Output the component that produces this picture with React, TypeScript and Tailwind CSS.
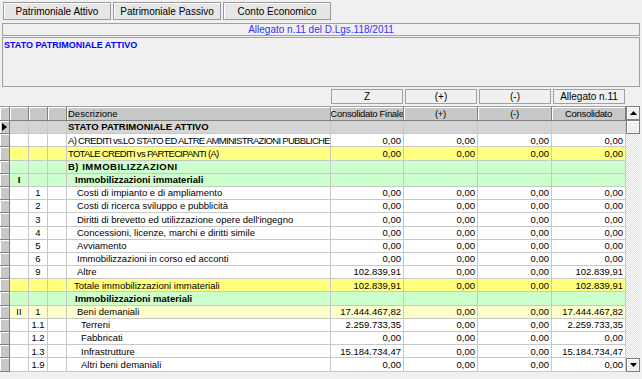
import React from 'react'

type Row = {
  c1?: string
  c2?: string
  desc: string
  pad: string
  bg: string
  bold?: boolean
  track?: string
  current?: boolean
  vals?: string[]
}

const Z = ['0,00', '0,00', '0,00', '0,00']

const rows: Row[] = [
  { desc: 'STATO PATRIMONIALE ATTIVO', pad: 'pl-[1px]', bg: 'bg-[#d4d4d4]', bold: true, current: true },
  { desc: 'A) CREDITI vs.LO STATO ED ALTRE AMMINISTRAZIONI PUBBLICHE PER LA PARTECIPAZIONE AL FONDO DI DOTAZIONE', pad: 'pl-[1px]', bg: 'bg-white', track: 'tracking-[-0.7px]', vals: Z },
  { desc: 'TOTALE CREDITI vs PARTECIPANTI (A)', pad: 'pl-[1px]', bg: 'bg-[#ffff80]', track: 'tracking-[-0.7px]', vals: Z },
  { desc: 'B) IMMOBILIZZAZIONI', pad: 'pl-[1px]', bg: 'bg-[#ccffcc]', bold: true, track: 'tracking-[0.5px]' },
  { c1: 'I', desc: 'Immobilizzazioni immateriali', pad: 'pl-[8px]', bg: 'bg-[#ccffcc]', bold: true },
  { c2: '1', desc: 'Costi di impianto e di ampliamento', pad: 'pl-[10px]', bg: 'bg-white', vals: Z },
  { c2: '2', desc: 'Costi di ricerca sviluppo e pubblicità', pad: 'pl-[10px]', bg: 'bg-white', vals: Z },
  { c2: '3', desc: "Diritti di brevetto ed utilizzazione opere dell'ingegno", pad: 'pl-[10px]', bg: 'bg-white', vals: Z },
  { c2: '4', desc: 'Concessioni, licenze, marchi e diritti simile', pad: 'pl-[10px]', bg: 'bg-white', vals: Z },
  { c2: '5', desc: 'Avviamento', pad: 'pl-[10px]', bg: 'bg-white', vals: Z },
  { c2: '6', desc: 'Immobilizzazioni in corso ed acconti', pad: 'pl-[10px]', bg: 'bg-white', vals: Z },
  { c2: '9', desc: 'Altre', pad: 'pl-[10px]', bg: 'bg-white', vals: ['102.839,91', '0,00', '0,00', '102.839,91'] },
  { desc: 'Totale immobilizzazioni immateriali', pad: 'pl-[7px]', bg: 'bg-[#ffff80]', vals: ['102.839,91', '0,00', '0,00', '102.839,91'] },
  { desc: 'Immobilizzazioni materiali', pad: 'pl-[8px]', bg: 'bg-[#ccffcc]', bold: true },
  { c1: 'II', c2: '1', desc: 'Beni demaniali', pad: 'pl-[10px]', bg: 'bg-[#ffffcc]', vals: ['17.444.467,82', '0,00', '0,00', '17.444.467,82'] },
  { c2: '1.1', desc: 'Terreni', pad: 'pl-[14px]', bg: 'bg-white', vals: ['2.259.733,35', '0,00', '0,00', '2.259.733,35'] },
  { c2: '1.2', desc: 'Fabbricati', pad: 'pl-[14px]', bg: 'bg-white', vals: Z },
  { c2: '1.3', desc: 'Infrastrutture', pad: 'pl-[14px]', bg: 'bg-white', vals: ['15.184.734,47', '0,00', '0,00', '15.184.734,47'] },
  { c2: '1.9', desc: 'Altri beni demaniali', pad: 'pl-[14px]', bg: 'bg-white', vals: Z },
]

const numW = ['w-[73px]', 'w-[74px]', 'w-[74px]', 'w-[74px]']

const cell = 'shrink-0 border-r border-b border-[#c8c8c8] flex items-center'
const head = 'shrink-0 bg-[#c8c8c8] border-r border-b border-[#808080] shadow-[inset_1px_1px_0_#ffffff] flex items-center'

function GridRow({ r }: { r: Row }) {
  return (
    <div className={`flex h-[13.2px] ${r.bg}`}>
      <div className={`${head} w-[10px] pl-[2px]`}>
        {r.current && (
          <svg width="5" height="8" viewBox="0 0 5 8">
            <path d="M0 0 L5 4 L0 8 Z" fill="#000" />
          </svg>
        )}
      </div>
      <div className={`${cell} w-[19px] justify-center ${r.bold ? 'font-bold' : ''}`}>{r.c1}</div>
      <div className={`${cell} w-[19px] justify-center`}>{r.c2}</div>
      <div className={`${cell} w-[19px]`} />
      <div className={`${cell} w-[264px] ${r.pad} overflow-hidden whitespace-nowrap ${r.bold ? 'font-bold' : ''} ${r.track ?? ''}`}>
        {r.desc}
      </div>
      {numW.map((w, i) => (
        <div key={i} className={`${cell} ${w} justify-end pr-[2px]`}>
          {r.vals ? r.vals[i] : ''}
        </div>
      ))}
    </div>
  )
}

export default function App() {
  return (
    <div className="w-[642px] h-[379px] bg-[#f0f0f0] overflow-hidden font-['Liberation_Sans',Arial,sans-serif] text-[#000]">
      {/* buttons */}
      <div className="flex gap-[2px] pt-[2px] pl-[3px]">
        {['Patrimoniale Attivo', 'Patrimoniale Passivo', 'Conto Economico'].map((t) => (
          <button
            key={t}
            className="w-[108px] h-[18px] bg-[#e6e6e6] border border-[#9a9a9a] shadow-[inset_1px_1px_0_#ffffff] text-[10px] flex items-center justify-center"
          >
            {t}
          </button>
        ))}
      </div>

      {/* allegato bar */}
      <div className="mt-[3px] mx-[2px] h-[13px] border border-[#a0a0a0] flex items-center justify-center text-[10px] text-[#3030ff] leading-none">
        Allegato n.11 del D.Lgs.118/2011
      </div>

      {/* title box */}
      <div className="mt-[1px] mx-[2px] h-[50px] border border-[#a0a0a0] pl-[1px] pt-[1px] text-[9px] font-bold text-[#0000ff] leading-[12px]">
        STATO PATRIMONIALE ATTIVO
      </div>

      {/* column group headers */}
      <div className="flex mt-[2px] h-[15px] text-[10px]">
        <div className="w-[331px] shrink-0" />
        {['Z', '(+)', '(-)', 'Allegato n.11'].map((t, i) => (
          <div key={t} className={`${numW[i]} shrink-0 ${i > 0 ? 'pl-[1px]' : ''} pr-[1px]`}>
            <div className="h-full border border-[#a0a0a0] bg-[#f0f0f0] flex items-center justify-center leading-none">
              {t}
            </div>
          </div>
        ))}
      </div>

      {/* grid */}
      <div className="mt-[2px] flex text-[9.5px] leading-none font-['Liberation_Sans_Narrow','Liberation_Sans',sans-serif]">
        <div className="w-[626px] shrink-0 border-t border-[#a0a0a0]">
          <div className="flex h-[14px] whitespace-nowrap">
            <div className={`${head} w-[10px]`} />
            <div className={`${head} w-[19px]`} />
            <div className={`${head} w-[19px]`} />
            <div className={`${head} w-[19px]`} />
            <div className={`${head} w-[264px] pl-[1px]`}>Descrizione</div>
            {['Consolidato Finale', '(+)', '(-)', 'Consolidato'].map((t, i) => (
              <div key={t} className={`${head} ${numW[i]} justify-center overflow-hidden tracking-[-0.3px]`}>
                {t}
              </div>
            ))}
          </div>
          {rows.map((r, i) => (
            <GridRow key={i} r={r} />
          ))}
        </div>

        {/* scrollbar */}
        <div className="w-[14px] shrink-0 flex flex-col h-[266px]">
          <div className="h-[14px] bg-[#f0f0f0] border border-[#808080] shadow-[inset_1px_1px_0_#ffffff] flex items-center justify-center">
            <svg width="7" height="4" viewBox="0 0 7 4">
              <path d="M0 4 L3.5 0 L7 4 Z" fill="#000" />
            </svg>
          </div>
          <div className="h-[14px] bg-[#f0f0f0] border border-[#808080] shadow-[inset_1px_1px_0_#ffffff]" />
          <div className="flex-1 bg-[image:repeating-conic-gradient(#dcdcdc_0_25%,#ffffff_0_50%)] bg-[length:2px_2px]" />
          <div className="h-[14px] bg-[#f0f0f0] border border-[#808080] shadow-[inset_1px_1px_0_#ffffff] flex items-center justify-center">
            <svg width="7" height="4" viewBox="0 0 7 4">
              <path d="M0 0 L3.5 4 L7 0 Z" fill="#000" />
            </svg>
          </div>
        </div>
      </div>
    </div>
  )
}
